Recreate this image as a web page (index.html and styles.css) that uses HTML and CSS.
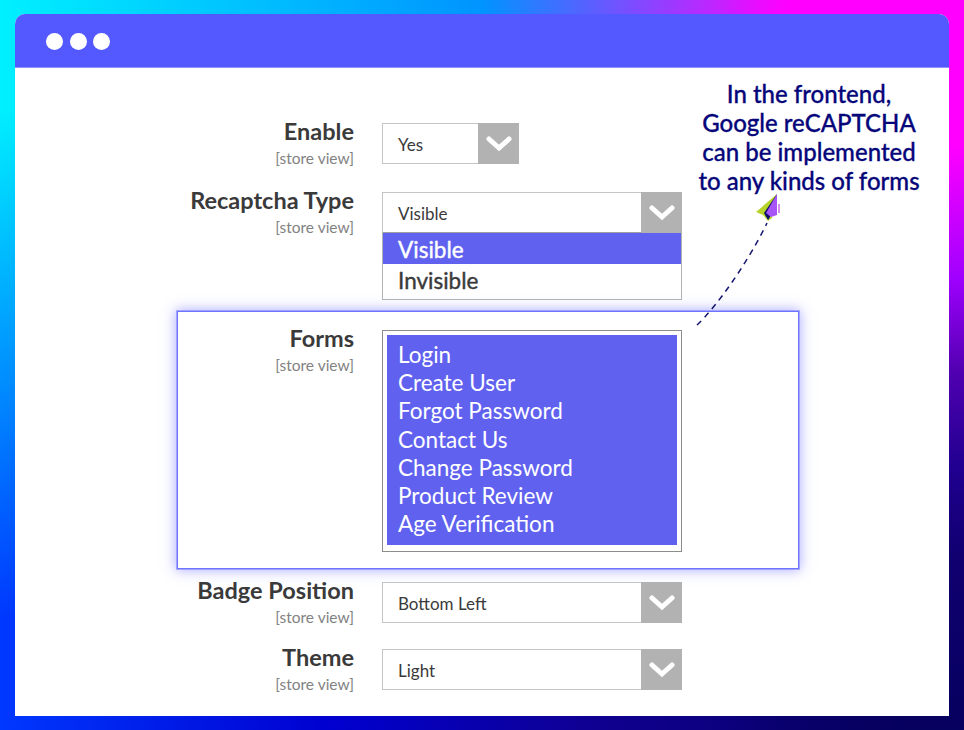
FILE: index.html
```html
<!DOCTYPE html>
<html lang="en">
<head>
<meta charset="utf-8">
<title>Google reCAPTCHA configuration</title>
<link rel="stylesheet" href="styles.css">
</head>
<body>
<main class="window">
  <header class="titlebar">
    <span class="dot"></span><span class="dot"></span><span class="dot"></span>
  </header>
  <section class="content">
    <div class="row row-enable">
      <div class="label"><div class="name">Enable</div><div class="scope">[store view]</div></div>
      <div class="select select-short"><span class="value">Yes</span><span class="arrow"><svg viewBox="0 0 26 16" class="chev"><path d="M3 3l10 9 10-9"/></svg></span></div>
    </div>
    <div class="row row-type">
      <div class="label"><div class="name">Recaptcha Type</div><div class="scope">[store view]</div></div>
      <div class="field">
        <div class="select"><span class="value">Visible</span><span class="arrow"><svg viewBox="0 0 26 16" class="chev"><path d="M3 3l10 9 10-9"/></svg></span></div>
        <ul class="dropdown">
          <li class="selected">Visible</li>
          <li>Invisible</li>
        </ul>
      </div>
    </div>
    <div class="row row-forms">
      <div class="label"><div class="name">Forms</div><div class="scope">[store view]</div></div>
      <div class="listbox">
        <ul class="options">
          <li>Login</li>
          <li>Create User</li>
          <li>Forgot Password</li>
          <li>Contact Us</li>
          <li>Change Password</li>
          <li>Product Review</li>
          <li>Age Verification</li>
        </ul>
      </div>
    </div>
    <div class="row row-badge">
      <div class="label"><div class="name">Badge Position</div><div class="scope">[store view]</div></div>
      <div class="select"><span class="value">Bottom Left</span><span class="arrow"><svg viewBox="0 0 26 16" class="chev"><path d="M3 3l10 9 10-9"/></svg></span></div>
    </div>
    <div class="row row-theme">
      <div class="label"><div class="name">Theme</div><div class="scope">[store view]</div></div>
      <div class="select"><span class="value">Light</span><span class="arrow"><svg viewBox="0 0 26 16" class="chev"><path d="M3 3l10 9 10-9"/></svg></span></div>
    </div>
    <p class="note">In the frontend,<br>Google reCAPTCHA<br>can be implemented<br>to any kinds of forms</p>
    <svg class="plane" viewBox="0 0 110 145" aria-hidden="true">
      <path class="trail" d="M2 131C22 112 52 70 72 29"/>
      <path fill="#b5d32a" d="M82 0L61 18 68 21 73 27 77 24Z"/>
      <path fill="#0b0b6b" d="M82 0L69 19 73 26 75 23Z"/>
      <path fill="#a855f7" d="M82 0L71 19 76 23 82 21Z"/>
      <path fill="#d58cf5" d="M83 10h2v9h-2z"/>
    </svg>
  </section>
</main>
</body>
</html>
```
FILE: styles.css
```css
* { box-sizing: border-box; }
html, body { margin: 0; height: 100%; }
body {
  position: relative;
  width: 964px;
  height: 730px;
  overflow: hidden;
  padding: 14px 15px;
  font-family: "Lato", "Noto Sans", sans-serif;
  background: linear-gradient(90deg, #0038ff 0, #0000d0 34%, #100090 62%, #06005e 100%);
}
body::before {
  content: "";
  position: absolute;
  inset: 0;
  background: linear-gradient(90deg, #00f0ff 0, #0094ff 50%, #ff00ff 82%);
  -webkit-mask-image: linear-gradient(#000 15%, transparent 85%);
  mask-image: linear-gradient(#000 15%, transparent 85%);
}
body::after {
  content: "";
  position: absolute;
  top: 0;
  right: 0;
  bottom: 0;
  width: 25%;
  background: linear-gradient(#ff00ff 0, #ff00ff 20%, #a000ff 38%, #5000b0 51%, #200090 64%, #100070 76%, #06005e 100%);
  -webkit-mask-image: linear-gradient(90deg, transparent, #000 80%);
  mask-image: linear-gradient(90deg, transparent, #000 80%);
}
ul { list-style: none; margin: 0; padding: 0; }
.window { position: relative; z-index: 1; width: 934px; height: 702px; background: #fff; border-radius: 10px 10px 0 0; overflow: hidden; }
.titlebar { height: 54px; background: #5458ff; border-bottom: 1px solid #8f92ff; display: flex; align-items: center; gap: 6.5px; padding: 1px 0 0 31px; }
.dot { width: 17px; height: 17px; border-radius: 50%; background: #fff; }
.content { padding: 55px 0 0 0; position: relative; }
.row { display: flex; align-items: flex-start; }
.label { width: 339px; text-align: right; color: #3a3a3a; }
.name { font-size: 23.5px; font-weight: 700; line-height: 17px; }
.scope { font-size: 15.5px; color: #828282; line-height: 18px; margin-top: 9px; }
.field { display: flex; flex-direction: column; width: 300px; margin-left: 28px; }
.select { margin-left: 28px; width: 300px; height: 41px; border: 1px solid #c4c4c4; border-right: 0; display: flex; justify-content: space-between; background: #fff; }
.field .select { margin-left: 0; border-bottom-color: #a0a0a0; }
.select-short { width: 137px; }
.value { font-size: 17px; color: #3a3a3a; padding-left: 15px; line-height: 41px; }
.arrow { width: 41px; height: 41px; margin: -1px 0; background: #b2b2b2; display: flex; align-items: center; justify-content: center; }
.chev { width: 26px; height: 16px; fill: none; stroke: #fff; stroke-width: 5; stroke-linecap: round; stroke-linejoin: miter; }
.row-type { margin-top: 25px; }
.dropdown { border: 1px solid #b2b2b2; border-top: 0; font-size: 22.5px; font-weight: 400; -webkit-text-stroke: 0.4px currentColor; color: #3a3a3a; height: 67px; }
.dropdown li { padding-left: 15px; height: 31px; line-height: 34px; }
.dropdown .selected { background: #6062ef; color: #fff; }
.row-forms { margin: 11px 0 0 162px; width: 622px; height: 258px; border: 1px solid #6f73ff; box-shadow: 0 0 0 1px rgba(127,131,255,.6), 0 0 12px 1px rgba(84,88,255,.5); padding-top: 18px; }
.row-forms .label { width: 176px; }
.listbox { margin-left: 28px; width: 300px; height: 222px; border: 1px solid #8c8c8c; padding: 4px 4px 6px; }
.options { background: #6062ef; color: #fff; height: 100%; padding: 6px 11px; font-size: 22.5px; line-height: 28.2px; }
.row-badge { margin-top: 13px; }
.row-theme { margin-top: 23px; }
.note { position: absolute; left: 669px; top: 11px; width: 250px; margin: 0; text-align: center; color: #06067a; font-size: 24px; font-weight: 500; -webkit-text-stroke: 0.3px currentColor; line-height: 29px; }
.plane { position: absolute; left: 680px; top: 126px; width: 110px; height: 145px; }
.trail { fill: none; stroke: #16166e; stroke-width: 1.5; stroke-dasharray: 6 5; }
```
